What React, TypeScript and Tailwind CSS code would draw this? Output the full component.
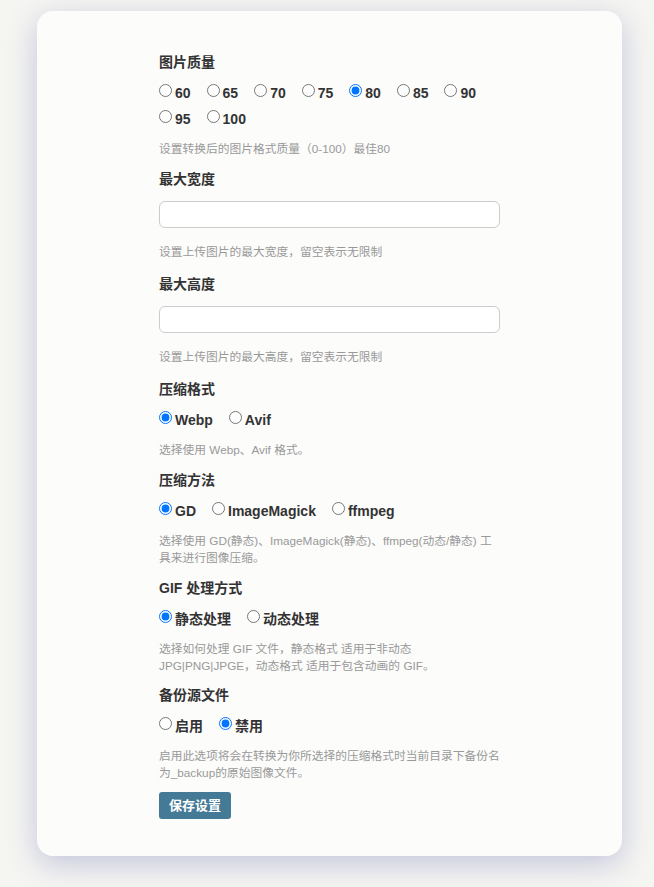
import React from "react";

const FONT = '"Liberation Sans", Arial, "Noto Sans CJK SC", sans-serif';

function RadioGroup({ name, options, checked }: { name: string; options: string[]; checked: string }) {
  return (
    <div className="leading-[26px] text-sm font-bold text-[#333]">
      {options.map((o) => (
        <label key={o} className="mr-4 inline-block whitespace-nowrap">
          <input
            type="radio"
            name={name}
            defaultChecked={o === checked}
            className="ml-0 mr-[3px] mt-[3px] align-[1px]"
          />
          {o}
        </label>
      ))}
    </div>
  );
}

function Label({ children }: { children: React.ReactNode }) {
  return <div className="text-sm font-bold leading-5 text-[#333]">{children}</div>;
}

function Desc({ children, className = "" }: { children: React.ReactNode; className?: string }) {
  return <p className={"text-[11.75px] leading-[17px] text-[#999] " + className}>{children}</p>;
}

export default function App() {
  return (
    <div className="min-h-[887px] bg-[#f5f5f2] pt-[11px] pb-[31px]" style={{ fontFamily: FONT }}>
      <div className="ml-[37px] w-[585px] rounded-2xl bg-[#fcfcfb] px-[122px] pt-[41px] pb-[37px] shadow-[0_8px_30px_rgba(70,75,160,0.28)]">
        <section className="mb-3">
          <Label>图片质量</Label>
          <div className="mt-2">
            <RadioGroup name="q" options={["60", "65", "70", "75", "80", "85", "90", "95", "100"]} checked="80" />
          </div>
          <Desc className="mt-2">设置转换后的图片格式质量（0-100）最佳80</Desc>
        </section>

        <section className="mb-[14px]">
          <Label>最大宽度</Label>
          <input
            type="text"
            className="mt-3 block h-[27px] w-full rounded-md border border-[#ccc] bg-white px-2 text-sm outline-none"
          />
          <Desc className="mt-[15px]">设置上传图片的最大宽度，留空表示无限制</Desc>
        </section>

        <section className="mb-[14px]">
          <Label>最大高度</Label>
          <input
            type="text"
            className="mt-3 block h-[27px] w-full rounded-md border border-[#ccc] bg-white px-2 text-sm outline-none"
          />
          <Desc className="mt-[15px]">设置上传图片的最大高度，留空表示无限制</Desc>
        </section>

        <section className="mb-3">
          <Label>压缩格式</Label>
          <div className="mt-2">
            <RadioGroup name="f" options={["Webp", "Avif"]} checked="Webp" />
          </div>
          <Desc className="mt-2">选择使用 Webp、Avif 格式。</Desc>
        </section>

        <section className="mb-3">
          <Label>压缩方法</Label>
          <div className="mt-2">
            <RadioGroup name="m" options={["GD", "ImageMagick", "ffmpeg"]} checked="GD" />
          </div>
          <Desc className="mt-2">选择使用 GD(静态)、ImageMagick(静态)、ffmpeg(动态/静态) 工具来进行图像压缩。</Desc>
        </section>

        <section className="mb-[11px]">
          <Label>GIF 处理方式</Label>
          <div className="mt-2">
            <RadioGroup name="g" options={["静态处理", "动态处理"]} checked="静态处理" />
          </div>
          <Desc className="mt-2">选择如何处理 GIF 文件，静态格式 适用于非动态 JPG|PNG|JPGE，动态格式 适用于包含动画的 GIF。</Desc>
        </section>

        <section className="mb-[11px]">
          <Label>备份源文件</Label>
          <div className="mt-2">
            <RadioGroup name="b" options={["启用", "禁用"]} checked="禁用" />
          </div>
          <Desc className="mt-2">启用此选项将会在转换为你所选择的压缩格式时当前目录下备份名为_backup的原始图像文件。</Desc>
        </section>

        <button className="h-[27px] rounded-[3px] bg-[#457a96] px-[10px] text-[13px] font-bold text-white">
          保存设置
        </button>
      </div>
    </div>
  );
}
